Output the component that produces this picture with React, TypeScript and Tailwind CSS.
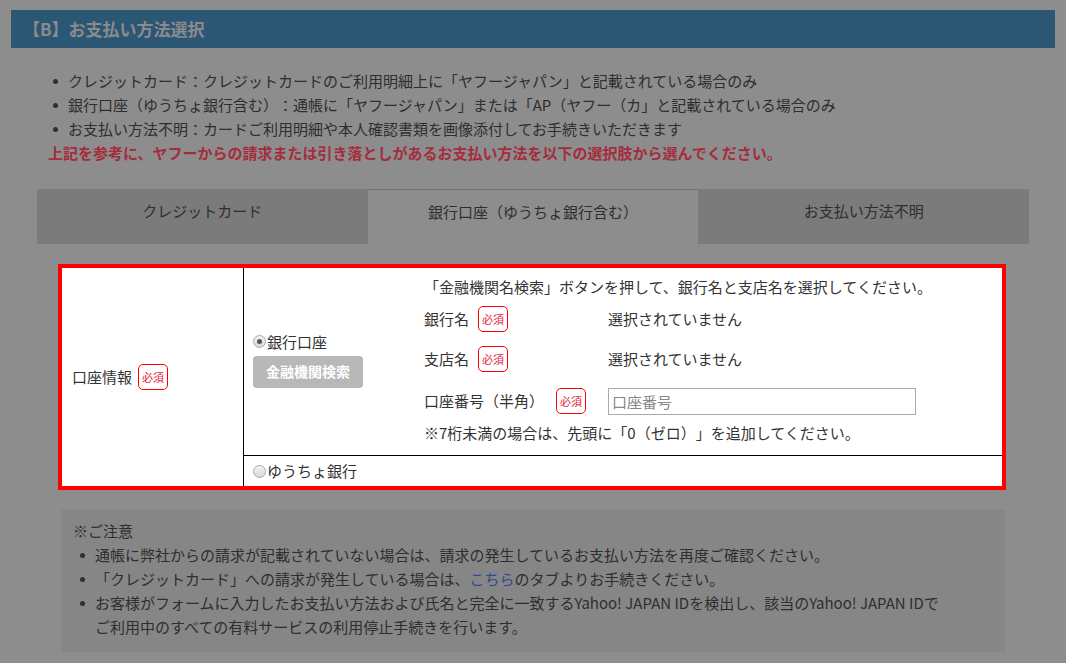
import React from 'react'

const font = "font-['Noto_Sans_CJK_JP','Noto_Sans',sans-serif] [text-spacing-trim:space-all]"

function Badge() {
  return (
    <span className="inline-flex h-[26px] w-[30px] items-center justify-center rounded-[5px] border border-[#ff0000] bg-white text-[11px] leading-none text-[#e3203c]">
      必須
    </span>
  )
}

function Radio({ checked }: { checked?: boolean }) {
  return (
    <span className="mr-[1px] inline-flex h-[13px] w-[13px] items-center justify-center rounded-full border border-[#a8a8a8] bg-gradient-to-b from-[#f4f4f4] to-[#d8d8d8]">
      {checked && <span className="h-[5px] w-[5px] rounded-full bg-[#555]" />}
    </span>
  )
}

function Dot() {
  return <span className="mr-[10px] mt-[10px] h-[5px] w-[5px] shrink-0 rounded-full bg-[#2e2e2e]" />
}

const intro = [
  'クレジットカード：クレジットカードのご利用明細上に「ヤフージャパン」と記載されている場合のみ',
  '銀行口座（ゆうちょ銀行含む）：通帳に「ヤフージャパン」または「AP（ヤフー（カ」と記載されている場合のみ',
  'お支払い方法不明：カードご利用明細や本人確認書類を画像添付してお手続きいただきます',
]

const tabs = ['クレジットカード', '銀行口座（ゆうちょ銀行含む）', 'お支払い方法不明']

export default function App() {
  return (
    <div className={`h-[663px] w-[1066px] overflow-hidden bg-[#8d8d8d] text-[15px] text-[#2e2e2e] ${font}`}>
      <div className="mx-[11px] mt-[10px] flex h-[38px] items-center bg-[#2b5775] pl-[12px] text-[17px] font-bold text-[#8b8b8b]">
        【B】お支払い方法選択
      </div>

      <ul className="mt-[21px] pl-[53px]">
        {intro.map((t) => (
          <li key={t} className="flex h-[24px] items-start leading-[24px]">
            <Dot />
            <span>{t}</span>
          </li>
        ))}
      </ul>
      <p className="pl-[48px] font-bold leading-[24px] text-[#a52c3c]">
        上記を参考に、ヤフーからの請求または引き落としがあるお支払い方法を以下の選択肢から選んでください。
      </p>

      <div className="ml-[37px] mt-[24px] grid h-[55px] w-[992px] grid-cols-3">
        {tabs.map((t, i) => (
          <div
            key={t}
            className={`pt-[10px] text-center leading-[24px] ${
              i === 1 ? 'border-t border-[#707070] bg-[#8d8d8d]' : 'bg-[#7b7b7b]'
            }`}
          >
            {t}
          </div>
        ))}
      </div>

      <div className="ml-[58px] mt-[20px] flex w-[948px] border-4 border-[#ff0000] bg-white text-[#333]">
        <div className="flex w-[182px] shrink-0 items-center border-r border-black pl-[10px]">
          <span className="leading-[24px]">口座情報</span>
          <span className="ml-[6px]">
            <Badge />
          </span>
        </div>
        <div className="flex flex-1 flex-col">
          <div className="flex border-b border-black">
            <div className="flex w-[180px] shrink-0 flex-col justify-center pb-[6px] pl-[9px]">
              <div className="flex h-[24px] items-center leading-[24px]">
                <Radio checked />
                <span>銀行口座</span>
              </div>
              <button className="mt-[2px] h-[32px] w-[110px] rounded-[4px] bg-[#b8b8b8] text-[14px] font-bold text-white">
                金融機関検索
              </button>
            </div>
            <div className="flex flex-col pb-[10px] pt-[7px]">
              <p className="h-[24px] leading-[24px]">「金融機関名検索」ボタンを押して、銀行名と支店名を選択してください。</p>
              <div className="flex h-[40px] items-center">
                <div className="flex w-[184px] items-center">
                  <span>銀行名</span>
                  <span className="ml-[9px]">
                    <Badge />
                  </span>
                </div>
                <span>選択されていません</span>
              </div>
              <div className="flex h-[40px] items-center">
                <div className="flex w-[184px] items-center">
                  <span>支店名</span>
                  <span className="ml-[9px]">
                    <Badge />
                  </span>
                </div>
                <span>選択されていません</span>
              </div>
              <div className="mt-[2px] flex h-[40px] items-center">
                <div className="flex w-[184px] items-center">
                  <span>口座番号（半角）</span>
                  <span className="ml-[12px]">
                    <Badge />
                  </span>
                </div>
                <input
                  placeholder="口座番号"
                  className="h-[27px] w-[308px] border border-[#aaa] px-[3px] text-[15px] placeholder:text-[#888]"
                />
              </div>
              <p className="h-[24px] leading-[24px]">※7桁未満の場合は、先頭に「0（ゼロ）」を追加してください。</p>
            </div>
          </div>
          <div className="flex h-[30px] items-center pl-[9px]">
            <Radio />
            <span>ゆうちょ銀行</span>
          </div>
        </div>
      </div>

      <div className="ml-[61px] mt-[20px] h-[142px] w-[944px] bg-[#868686] pl-[12px] pt-[9px] leading-[24px]">
        <p>※ご注意</p>
        <ul className="pl-[7px]">
          <li className="flex">
            <Dot />
            <span>通帳に弊社からの請求が記載されていない場合は、請求の発生しているお支払い方法を再度ご確認ください。</span>
          </li>
          <li className="flex">
            <Dot />
            <span>
              「クレジットカード」への請求が発生している場合は、<span className="text-[#2b4a8e]">こちら</span>のタブよりお手続きください。
            </span>
          </li>
          <li className="flex">
            <Dot />
            <span>
              お客様がフォームに入力したお支払い方法および氏名と完全に一致するYahoo! JAPAN IDを検出し、該当のYahoo! JAPAN IDで
              <br />
              ご利用中のすべての有料サービスの利用停止手続きを行います。
            </span>
          </li>
        </ul>
      </div>
    </div>
  )
}
